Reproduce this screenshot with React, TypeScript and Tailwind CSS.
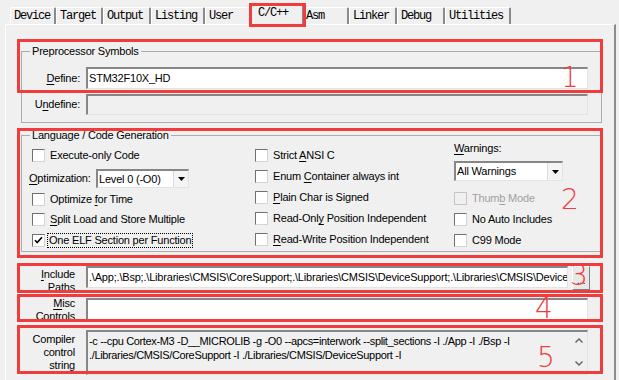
import React from 'react';

const tabs = [
  { name: 'Device', w: 'w-[46px]' },
  { name: 'Target', w: 'w-[47px]' },
  { name: 'Output', w: 'w-[48px]' },
  { name: 'Listing', w: 'w-[54px]' },
  { name: 'User', w: 'w-[47px]' },
  { name: 'C/C++', w: 'w-[54px]', sel: true },
  { name: 'Asm', w: 'w-[47px]' },
  { name: 'Linker', w: 'w-[48px]' },
  { name: 'Debug', w: 'w-[48px]' },
  { name: 'Utilities', w: 'w-[66px]' },
];

const field =
  'border-t-2 border-l-2 border-r border-b border-t-[#868686] border-l-[#868686] border-r-[#e3e3e3] border-b-[#e3e3e3]';

function U({ c }: { c: string }) {
  return <span className="underline decoration-1 underline-offset-[2px]">{c}</span>;
}

function Box({ checked = false, disabled = false }: { checked?: boolean; disabled?: boolean }) {
  return (
    <span
      className={
        disabled
          ? 'flex h-[13px] w-[13px] shrink-0 items-center justify-center border border-[#c6c6c6] bg-[#f0f0f0]'
          : 'flex h-[13px] w-[13px] shrink-0 items-center justify-center border border-t-[#707070] border-l-[#707070] border-r-[#d4d4d4] border-b-[#d4d4d4] bg-white'
      }
    >
      {checked && (
        <svg width="9" height="9" viewBox="0 0 9 9">
          <path d="M1 4.2 L3.2 6.6 L8 1.2" stroke="#000" strokeWidth="1.7" fill="none" />
        </svg>
      )}
    </span>
  );
}

function Check({
  children,
  checked,
  disabled,
  focus,
  className = '',
}: {
  children: React.ReactNode;
  checked?: boolean;
  disabled?: boolean;
  focus?: boolean;
  className?: string;
}) {
  return (
    <div className={`flex h-[13px] items-center ${className}`}>
      <Box checked={checked} disabled={disabled} />
      {focus ? (
        <span className="ml-[2px] border border-dotted border-black px-[1px] leading-[13px]">{children}</span>
      ) : (
        <span className={disabled ? 'ml-[5px] leading-[13px] text-[#a0a0a0]' : 'ml-[5px] leading-[13px]'}>
          {children}
        </span>
      )}
    </div>
  );
}

function Arrow() {
  return (
    <div className="flex h-full w-[15px] items-center justify-center border-l border-[#dcdcdc] bg-[#f4f4f4]">
      <svg width="7" height="4" viewBox="0 0 7 4">
        <path d="M0 0 H7 L3.5 4 Z" fill="#000" />
      </svg>
    </div>
  );
}

export default function App() {
  return (
    <div className="relative h-[380px] w-[619px] overflow-hidden bg-[#f0f0f0] font-['Liberation_Sans',Arial,sans-serif] text-[11px] tracking-[-0.2px] text-black">
      {/* tab strip */}
      <div className="flex h-[24px] items-end pl-[10px] font-['Liberation_Mono','Courier_New',monospace] text-[12px] tracking-[-1.2px]">
        {tabs.map((t) =>
          t.sel ? (
            <div
              key={t.name}
              className={`relative z-10 -mx-[2px] -mb-px flex h-[22px] items-start rounded-t-[2px] border-l border-t border-r-2 border-l-white border-t-white border-r-[#8a8a8a] bg-[#f0f0f0] pl-[7px] pt-[3px] leading-[13px] ${t.w}`}
            >
              {t.name}
            </div>
          ) : (
            <div
              key={t.name}
              className={`flex h-[17px] items-center rounded-t-[2px] border-l border-t border-r-2 border-l-white border-t-white border-r-[#8a8a8a] pl-[3px] pt-px leading-[13px] ${t.w}`}
            >
              {t.name}
            </div>
          )
        )}
      </div>

      {/* page */}
      <div className="ml-[5px] h-[356px] w-[611px] border-l border-t border-r-2 border-l-white border-t-white border-r-[#8c8c8c] pl-[15px]">
        {/* Preprocessor Symbols */}
        <div className="relative mt-[26px] h-[72px] w-[581px] border border-[#acacac] pt-[15px]">
          <div className="absolute -top-[7px] left-[8px] bg-[#f0f0f0] px-[2px] leading-[13px]">Preprocessor Symbols</div>
          <div className="flex h-[22px] items-center">
            <span className="w-[59px] pr-px text-right">
              <U c="D" />
              efine:
            </span>
            <div className={`ml-[5px] flex h-[22px] w-[502px] items-center bg-white pl-px ${field}`}>STM32F10X_HD</div>
          </div>
          <div className="mt-[4px] flex h-[22px] items-center">
            <span className="w-[59px] pr-px text-right">
              U<U c="n" />
              define:
            </span>
            <div className={`ml-[5px] h-[21px] w-[502px] bg-[#f0f0f0] ${field}`} />
          </div>
        </div>

        {/* Language / Code Generation */}
        <div className="relative mt-[12px] h-[117px] w-[581px] border border-[#acacac]">
          <div className="absolute -top-[7px] left-[8px] bg-[#f0f0f0] px-[2px] leading-[13px]">
            Language / Code Generation
          </div>
          <div className="flex pl-[10px]">
            <div className="flex w-[223px] flex-col">
              <Check className="mt-[13px]">Execute-only Code</Check>
              <div className="-ml-[3px] mt-[7px] flex h-[19px] items-center">
                <span className="w-[67px]">
                  <U c="O" />
                  ptimization:
                </span>
                <div className={`flex h-[19px] w-[93px] items-center justify-between bg-white ${field}`}>
                  <span className="pl-px">Level 0 (-O0)</span>
                  <Arrow />
                </div>
              </div>
              <Check className="mt-[5px]">
                Optimize <U c="f" />
                or Time
              </Check>
              <Check className="mt-[7px]">
                <U c="S" />
                plit Load and Store Multiple
              </Check>
              <Check className="mt-[8px]" checked focus>
                One ELF Section per Function
              </Check>
            </div>

            <div className="flex w-[199px] flex-col gap-[8px] pt-[13px]">
              <Check>
                Strict <U c="A" />
                NSI C
              </Check>
              <Check>
                Enum <U c="C" />
                ontainer always int
              </Check>
              <Check>
                <U c="P" />
                lain Char is Signed
              </Check>
              <Check>
                Read-Onl<U c="y" /> Position Independent
              </Check>
              <Check>
                <U c="R" />
                ead-Write Position Independent
              </Check>
            </div>

            <div className="flex flex-col">
              <div className="mt-[6px] leading-[13px]">
                <U c="W" />
                arnings:
              </div>
              <div className={`mt-[6px] flex h-[20px] w-[109px] items-center justify-between bg-white ${field}`}>
                <span className="pl-px">All Warnings</span>
                <Arrow />
              </div>
              <div className="mt-[11px] flex flex-col gap-[8px]">
                <Check disabled>
                  Thum<U c="b" /> Mode
                </Check>
                <Check>No Auto Includes</Check>
                <Check>C99 Mode</Check>
              </div>
            </div>
          </div>
        </div>

        {/* Include Paths */}
        <div className="mt-[14px] flex h-[24px] items-start">
          <div className="h-[24px] w-[54px] pt-[2px] text-right leading-[13px]">
            <div>
              <U c="I" />
              nclude
            </div>
            <div>Paths</div>
          </div>
          <div
            className={`ml-[11px] flex h-[22px] w-[482px] items-center overflow-hidden whitespace-nowrap bg-white pl-px ${field}`}
          >
            {'.\\App;.\\Bsp;.\\Libraries\\CMSIS\\CoreSupport;.\\Libraries\\CMSIS\\DeviceSupport;.\\Libraries\\CMSIS\\DeviceSupport\\ST\\STM32F10x;.\\Libraries\\STM32F10x_StdPeriph_Driver\\inc'}
          </div>
          <div className="ml-[4px] flex h-[24px] w-[18px] items-end justify-center border border-t-white border-l-white border-r-[#808080] border-b-[#808080] bg-[#e8e8e8] pb-[3px] leading-none">
            ...
          </div>
        </div>

        {/* Misc Controls */}
        <div className="mt-[8px] flex h-[22px] items-start">
          <div className="-mt-[1px] h-[22px] w-[54px] text-right leading-[13px]">
            <div>
              <U c="M" />
              isc
            </div>
            <div>Controls</div>
          </div>
          <div className={`ml-[11px] h-[22px] w-[502px] bg-white ${field}`} />
        </div>

        {/* Compiler control string */}
        <div className="mt-[10px] flex h-[45px] items-start">
          <div className="h-[45px] w-[54px] pt-[3px] text-right leading-[13px]">
            <div>Compiler</div>
            <div>control</div>
            <div>string</div>
          </div>
          <div className={`ml-[11px] flex h-[45px] w-[502px] bg-[#f0f0f0] ${field}`}>
            <div className="flex-1 overflow-hidden whitespace-nowrap pl-px pt-[2px] leading-[14px] tracking-[-0.35px]">
              <div>-c --cpu Cortex-M3 -D__MICROLIB -g -O0 --apcs=interwork --split_sections -I ./App -I ./Bsp -I</div>
              <div>./Libraries/CMSIS/CoreSupport -I ./Libraries/CMSIS/DeviceSupport -I</div>
            </div>
            <div className="flex w-[17px] flex-col items-center justify-between pb-[8px] pt-[6px]">
              <svg width="8" height="5" viewBox="0 0 8 5">
                <path d="M0.5 4.5 L4 1 L7.5 4.5" stroke="#606060" strokeWidth="1.4" fill="none" />
              </svg>
              <svg width="8" height="5" viewBox="0 0 8 5">
                <path d="M0.5 0.5 L4 4 L7.5 0.5" stroke="#606060" strokeWidth="1.4" fill="none" />
              </svg>
            </div>
          </div>
        </div>
      </div>

      {/* red annotation boxes */}
      <div className="pointer-events-none absolute left-[249px] top-[3px] z-20 h-[24px] w-[57px] border-[3px] border-[#f03c3c]" />
      <div className="pointer-events-none absolute left-[17px] top-[39px] h-[54px] w-[586px] border-[3px] border-[#f03c3c]" />
      <div className="pointer-events-none absolute left-[17px] top-[128px] h-[130px] w-[586px] border-[3px] border-[#f03c3c]" />
      <div className="pointer-events-none absolute left-[17px] top-[263px] h-[30px] w-[586px] border-[3px] border-[#f03c3c]" />
      <div className="pointer-events-none absolute left-[17px] top-[294px] h-[28px] w-[586px] border-[3px] border-[#f03c3c]" />
      <div className="pointer-events-none absolute left-[17px] top-[325px] h-[49px] w-[586px] border-[3px] border-[#f03c3c]" />

      {/* red numbers */}
      <div className="pointer-events-none absolute left-[561px] top-[64px] font-['DejaVu_Sans',sans-serif] text-[28px] font-extralight leading-none tracking-normal text-[#f03c3c]">1</div>
      <div className="pointer-events-none absolute left-[561px] top-[186px] font-['DejaVu_Sans',sans-serif] text-[28px] font-extralight leading-none tracking-normal text-[#f03c3c]">2</div>
      <div className="pointer-events-none absolute left-[570px] top-[262px] font-['DejaVu_Sans',sans-serif] text-[28px] font-extralight leading-none tracking-normal text-[#f03c3c]">3</div>
      <div className="pointer-events-none absolute left-[535px] top-[295px] font-['DejaVu_Sans',sans-serif] text-[28px] font-extralight leading-none tracking-normal text-[#f03c3c]">4</div>
      <div className="pointer-events-none absolute left-[537px] top-[344px] font-['DejaVu_Sans',sans-serif] text-[28px] font-extralight leading-none tracking-normal text-[#f03c3c]">5</div>
    </div>
  );
}
